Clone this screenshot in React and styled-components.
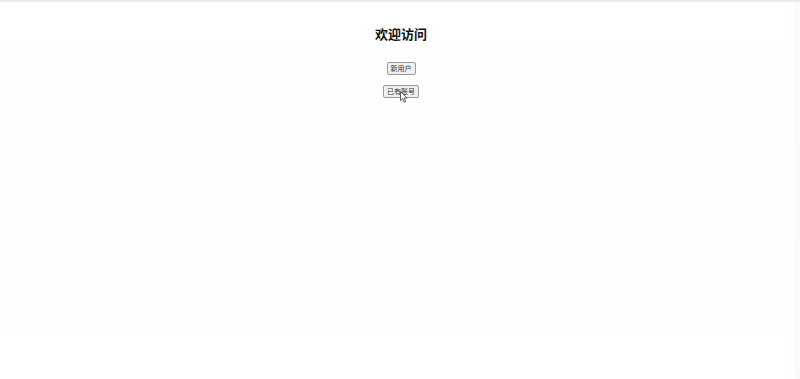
import React from 'react';
import styled, { createGlobalStyle } from 'styled-components';

const GlobalStyle = createGlobalStyle`
  html, body {
    margin: 0;
    padding: 0;
    background: #ffffff;
  }
  body {
    font-family: "Noto Sans CJK SC", "Liberation Sans", sans-serif;
  }
`;

const Page = styled.div`
  display: flex;
  flex-direction: column;
  align-items: center;
  min-height: 379px;
  padding: 24px 0 0 2px;
  border-top: 2px solid #ebebeb;
  box-sizing: border-box;
  background:
    linear-gradient(to left, #fcf9fd 5px, transparent 5px),
    linear-gradient(#ffffff, #fdfdfd 50%, #ffffff);
`;

const Title = styled.h2`
  margin: 0 0 20px;
  font-size: 13px;
  line-height: 16px;
  font-weight: 700;
  color: #111;
`;

const Button = styled.button`
  position: relative;
  font-family: "Noto Sans CJK SC", "Liberation Sans", sans-serif;
  font-size: 7px;
  line-height: 9px;
  padding: 1px 3px;
  margin-bottom: ${(p) => p.$gap || 0}px;
  color: #333;
  background: #f0f0f0;
  border: 1px solid #999;
  border-radius: 2px;
`;

const Cursor = styled.svg`
  position: absolute;
  left: 16px;
  top: 5px;
  width: 8px;
  height: 12px;
`;

export default function App() {
  return (
    <>
      <GlobalStyle />
      <Page>
        <Title>欢迎访问</Title>
        <Button $gap={10}>新用户</Button>
        <Button>
          已有账号
          <Cursor viewBox="0 0 8 12">
            <path d="M0.5 0.5 L0.5 9.5 L2.6 7.6 L4.2 11.2 L5.6 10.6 L4.1 7.1 L7 7.1 Z" fill="#fff" stroke="#333" strokeWidth="0.8" strokeLinejoin="round" />
          </Cursor>
        </Button>
      </Page>
    </>
  );
}
